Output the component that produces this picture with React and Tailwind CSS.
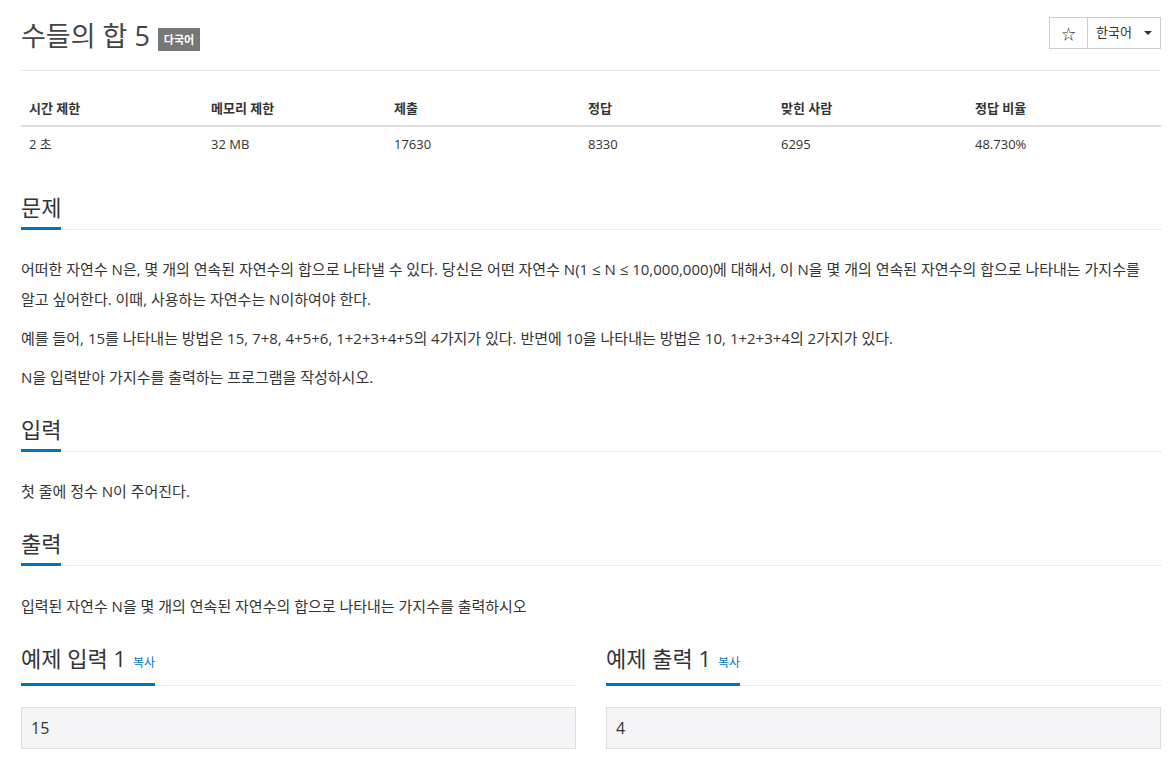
import React from "react";

const FONT = { fontFamily: '"Open Sans", "Noto Sans CJK KR", sans-serif' };

const stats = [
  { label: "시간 제한", value: "2 초", w: "w-[182px]" },
  { label: "메모리 제한", value: "32 MB", w: "w-[183px]" },
  { label: "제출", value: "17630", w: "w-[194px]" },
  { label: "정답", value: "8330", w: "w-[193px]" },
  { label: "맞힌 사람", value: "6295", w: "w-[194px]" },
  { label: "정답 비율", value: "48.730%", w: "w-[194px]" },
];

const SectionHead = ({ children, extra }) => (
  <div className="flex border-b border-dotted border-[#ddd]">
    <h2 className="-mb-px border-b-[3px] border-[#0076c0] pb-[5px] text-[22px] leading-[30px] text-[#333]">
      {children}
      {extra}
    </h2>
  </div>
);

const App = () => {
  return (
    <div className="min-h-[770px] bg-white pl-[21px] pr-[13px] pt-[16px] text-[#333] break-keep" style={FONT}>
      {/* title */}
      <div className="flex items-start justify-between border-b border-[#e5e5e5] pb-[16px]">
        <div className="flex items-center gap-2 pt-[2px]">
          <h1 className="text-[27px] leading-[36px] text-[#444]">수들의 합 5</h1>
          <span className="mt-[6px] bg-[#777] px-[6px] py-[3px] text-[11px] leading-[17px] font-semibold text-white">
            다국어
          </span>
        </div>
        <div className="mt-[1px] flex border border-[#ccc] text-[13px] text-[#333]">
          <div className="flex h-[30px] w-[38px] items-center justify-center border-r border-[#ccc] text-[14px]">☆</div>
          <div className="flex h-[30px] w-[72px] items-center gap-[12px] pl-[8px]">
            <span>한국어</span>
            <span className="h-0 w-0 border-x-[4px] border-t-[4px] border-x-transparent border-t-[#333]"></span>
          </div>
        </div>
      </div>

      {/* stats table */}
      <div className="mt-[24px]">
        <div className="flex border-b-2 border-[#ddd] text-[13px] font-bold">
          {stats.map((s) => (
            <div key={s.label} className={`${s.w} px-[8px] pb-[4px] leading-[26px]`}>{s.label}</div>
          ))}
        </div>
        <div className="flex text-[13px]">
          {stats.map((s) => (
            <div key={s.label} className={`${s.w} px-[8px] py-[4px] leading-[26px]`}>{s.value}</div>
          ))}
        </div>
      </div>

      {/* 문제 */}
      <div className="mt-[31px]">
        <SectionHead>문제</SectionHead>
        <div className="mt-[24px] text-[15px] leading-[30px] text-[#333]">
          <p>
            어떠한 자연수 N은, 몇 개의 연속된 자연수의 합으로 나타낼 수 있다. 당신은 어떤 자연수 N(1 ≤ N ≤ 10,000,000)에 대해서, 이 N을 몇 개의 연속된 자연수의 합으로 나타내는 가지수를 알고 싶어한다. 이때, 사용하는 자연수는 N이하여야 한다.
          </p>
          <p className="mt-[9px]">
            예를 들어, 15를 나타내는 방법은 15, 7+8, 4+5+6, 1+2+3+4+5의 4가지가 있다. 반면에 10을 나타내는 방법은 10, 1+2+3+4의 2가지가 있다.
          </p>
          <p className="mt-[9px]">N을 입력받아 가지수를 출력하는 프로그램을 작성하시오.</p>
        </div>
      </div>

      {/* 입력 */}
      <div className="mt-[22px]">
        <SectionHead>입력</SectionHead>
        <p className="mt-[24px] text-[15px] leading-[30px]">첫 줄에 정수 N이 주어진다.</p>
      </div>

      {/* 출력 */}
      <div className="mt-[22px]">
        <SectionHead>출력</SectionHead>
        <p className="mt-[25px] text-[15px] leading-[30px]">입력된 자연수 N을 몇 개의 연속된 자연수의 합으로 나타내는 가지수를 출력하시오</p>
      </div>

      {/* 예제 */}
      <div className="mt-[22px] grid grid-cols-2 gap-[30px]">
        {[
          { t: "예제 입력 1", v: "15" },
          { t: "예제 출력 1", v: "4" },
        ].map((s) => (
          <div key={s.t}>
            <SectionHead extra={<span className="ml-[7px] text-[12px] text-[#0076c0]">복사</span>}>{s.t}</SectionHead>
            <div className="mt-[21px] border border-[#ddd] bg-[#f5f5f7] px-[9px] py-[10px] text-[16px] leading-[20px] text-[#333]">
              {s.v}
            </div>
          </div>
        ))}
      </div>
    </div>
  );
};

export default App;
